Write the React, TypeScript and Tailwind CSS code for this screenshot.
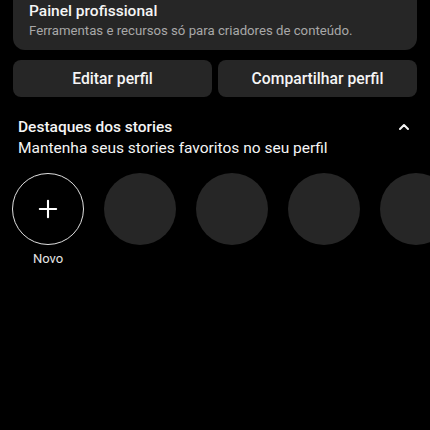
import { Plus, ChevronUp } from "lucide-react";

export default function App() {
  const highlights = [1, 2, 3, 4];

  return (
    <div className="h-[430px] w-[430px] overflow-hidden bg-black font-['Roboto',sans-serif] text-white">
      {/* Painel profissional */}
      <div className="mx-[13px] -mt-[14px] rounded-xl bg-[#262626] px-[16px] pb-[10px] pt-[14px]">
        <p className="text-[15.5px] font-medium leading-[22px] text-[#f5f5f5]">Painel profissional</p>
        <p className="text-[13.2px] leading-[18px] text-[#a8a8a8]">
          Ferramentas e recursos só para criadores de conteúdo.
        </p>
      </div>

      {/* Buttons */}
      <div className="mx-[13px] mt-[10px] flex gap-[6px]">
        <button className="h-[37px] flex-1 rounded-lg bg-[#262626] text-[15.7px] font-medium text-[#f5f5f5]">
          Editar perfil
        </button>
        <button className="h-[37px] flex-1 rounded-lg bg-[#262626] text-[15.7px] font-medium text-[#f5f5f5]">
          Compartilhar perfil
        </button>
      </div>

      {/* Destaques */}
      <div className="mt-[20px] flex items-center justify-between pl-[18px] pr-[18px]">
        <p className="text-[15.5px] font-medium leading-[20px] text-[#f5f5f5]">Destaques dos stories</p>
        <ChevronUp size={16} strokeWidth={3} className="text-[#f5f5f5]" />
      </div>
      <p className="pl-[18px] text-[15.5px] leading-[22px] text-[#f5f5f5]">
        Mantenha seus stories favoritos no seu perfil
      </p>

      <div className="mt-[14px] flex gap-[20px] pl-[12px]">
        <div className="flex shrink-0 flex-col items-center">
          <div className="flex h-[72px] w-[72px] items-center justify-center rounded-full border border-[#e0e0e0]">
            <Plus size={28} strokeWidth={1.8} className="text-white" />
          </div>
          <p className="mt-[6px] text-[13px] leading-[16px] text-[#e5e5e5]">Novo</p>
        </div>
        {highlights.map((h) => (
          <div key={h} className="h-[72px] w-[72px] shrink-0 rounded-full bg-[#262626]" />
        ))}
      </div>
    </div>
  );
}
